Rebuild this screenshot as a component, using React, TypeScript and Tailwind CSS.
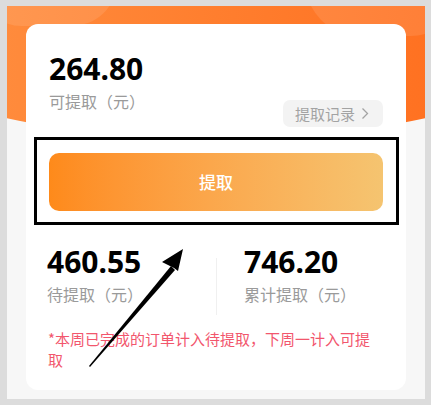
const stats = [
  { value: "460.55", label: "待提取（元）" },
  { value: "746.20", label: "累计提取（元）" },
];

const cjk = { fontFamily: '"Noto Sans CJK SC", sans-serif' };

export default function App() {
  return (
    <div
      className="relative h-[405px] w-[431px] bg-[#dcdcdc] pb-[6px] pl-[7px] pr-[6px] pt-[6px]"
      style={{ fontFamily: '"Noto Sans", "Noto Sans CJK SC", sans-serif' }}
    >
      <div className="relative h-full overflow-hidden bg-[#f7f7f7]">
        {/* orange header */}
        <div className="absolute left-[-209px] top-[-100px] h-[234px] w-[836px] rounded-b-[418px_162px] bg-linear-to-r from-[#ff9748] via-[#ff7e2e] to-[#ff6410]" />
        <div className="absolute left-[-30px] top-[-70px] h-[90px] w-[140px] rounded-full bg-white/10" />
        <div className="absolute right-[-40px] top-[-80px] h-[110px] w-[160px] rounded-full bg-white/10" />

        <div className="relative mx-[19px] mt-[18px] h-[366px] rounded-[12px] bg-white">
          <div className="flex items-start justify-between px-[23px] pt-[26.5px]">
            <div>
              <p className="text-[30px] font-bold leading-[36px] text-black">264.80</p>
              <p className="mt-[3px] text-[16px] leading-[22px] text-[#9a9a9a]" style={cjk}>可提取（元）</p>
            </div>
            <button
              type="button"
              className="mt-[49.5px] flex h-[27px] items-center gap-[6px] rounded-[7px] bg-[#f3f3f3] pl-[12px] pr-[14px] text-[15px] leading-[22px] text-[#a3a3a3]"
              style={cjk}
            >
              <span>提取记录</span>
              <svg width="8" height="13" viewBox="0 0 8 13" fill="none">
                <path d="M1.5 1.5 L6.5 6.5 L1.5 11.5" stroke="#a3a3a3" strokeWidth="1.3" />
              </svg>
            </button>
          </div>

          <div className="px-[23px] pt-[26px]">
            <button
              type="button"
              className="flex h-[58px] w-full items-center justify-center rounded-[10px] bg-linear-to-r from-[#fe8a1a] to-[#f5c470] text-[17px] font-medium text-white"
              style={cjk}
            >
              提取
            </button>
          </div>

          <div className="flex pt-[32.5px]">
            <div className="w-[190px] pl-[21px]">
              <p className="text-[30px] font-bold leading-[36px] text-black">{stats[0].value}</p>
              <p className="mt-[3px] text-[16px] leading-[22px] text-[#9a9a9a]" style={cjk}>{stats[0].label}</p>
            </div>
            <div className="mt-[14.5px] h-[57px] w-px bg-[#f0f0f0]" />
            <div className="pl-[27px]">
              <p className="text-[30px] font-bold leading-[36px] text-black">{stats[1].value}</p>
              <p className="mt-[3px] text-[16px] leading-[22px] text-[#9a9a9a]" style={cjk}>{stats[1].label}</p>
            </div>
          </div>

          <p className="pl-[22px] pr-[24px] pt-[13px] text-[15px] leading-[21px] text-[#f2566d]" style={cjk}>
            *本周已完成的订单计入待提取，下周一计入可提取
          </p>
        </div>
      </div>

      {/* annotation frame */}
      <div className="pointer-events-none absolute left-[34px] top-[137px] h-[88px] w-[365px] border-[3px] border-black" />

      {/* annotation arrow */}
      <svg className="pointer-events-none absolute left-0 top-0" width="431" height="405" viewBox="0 0 431 405">
        <polygon points="89,366 171,266 175,270 90,367" fill="#000" />
        <polygon points="183,249 178,271 174,268 168,265 162,262" fill="#000" />
      </svg>
    </div>
  );
}
